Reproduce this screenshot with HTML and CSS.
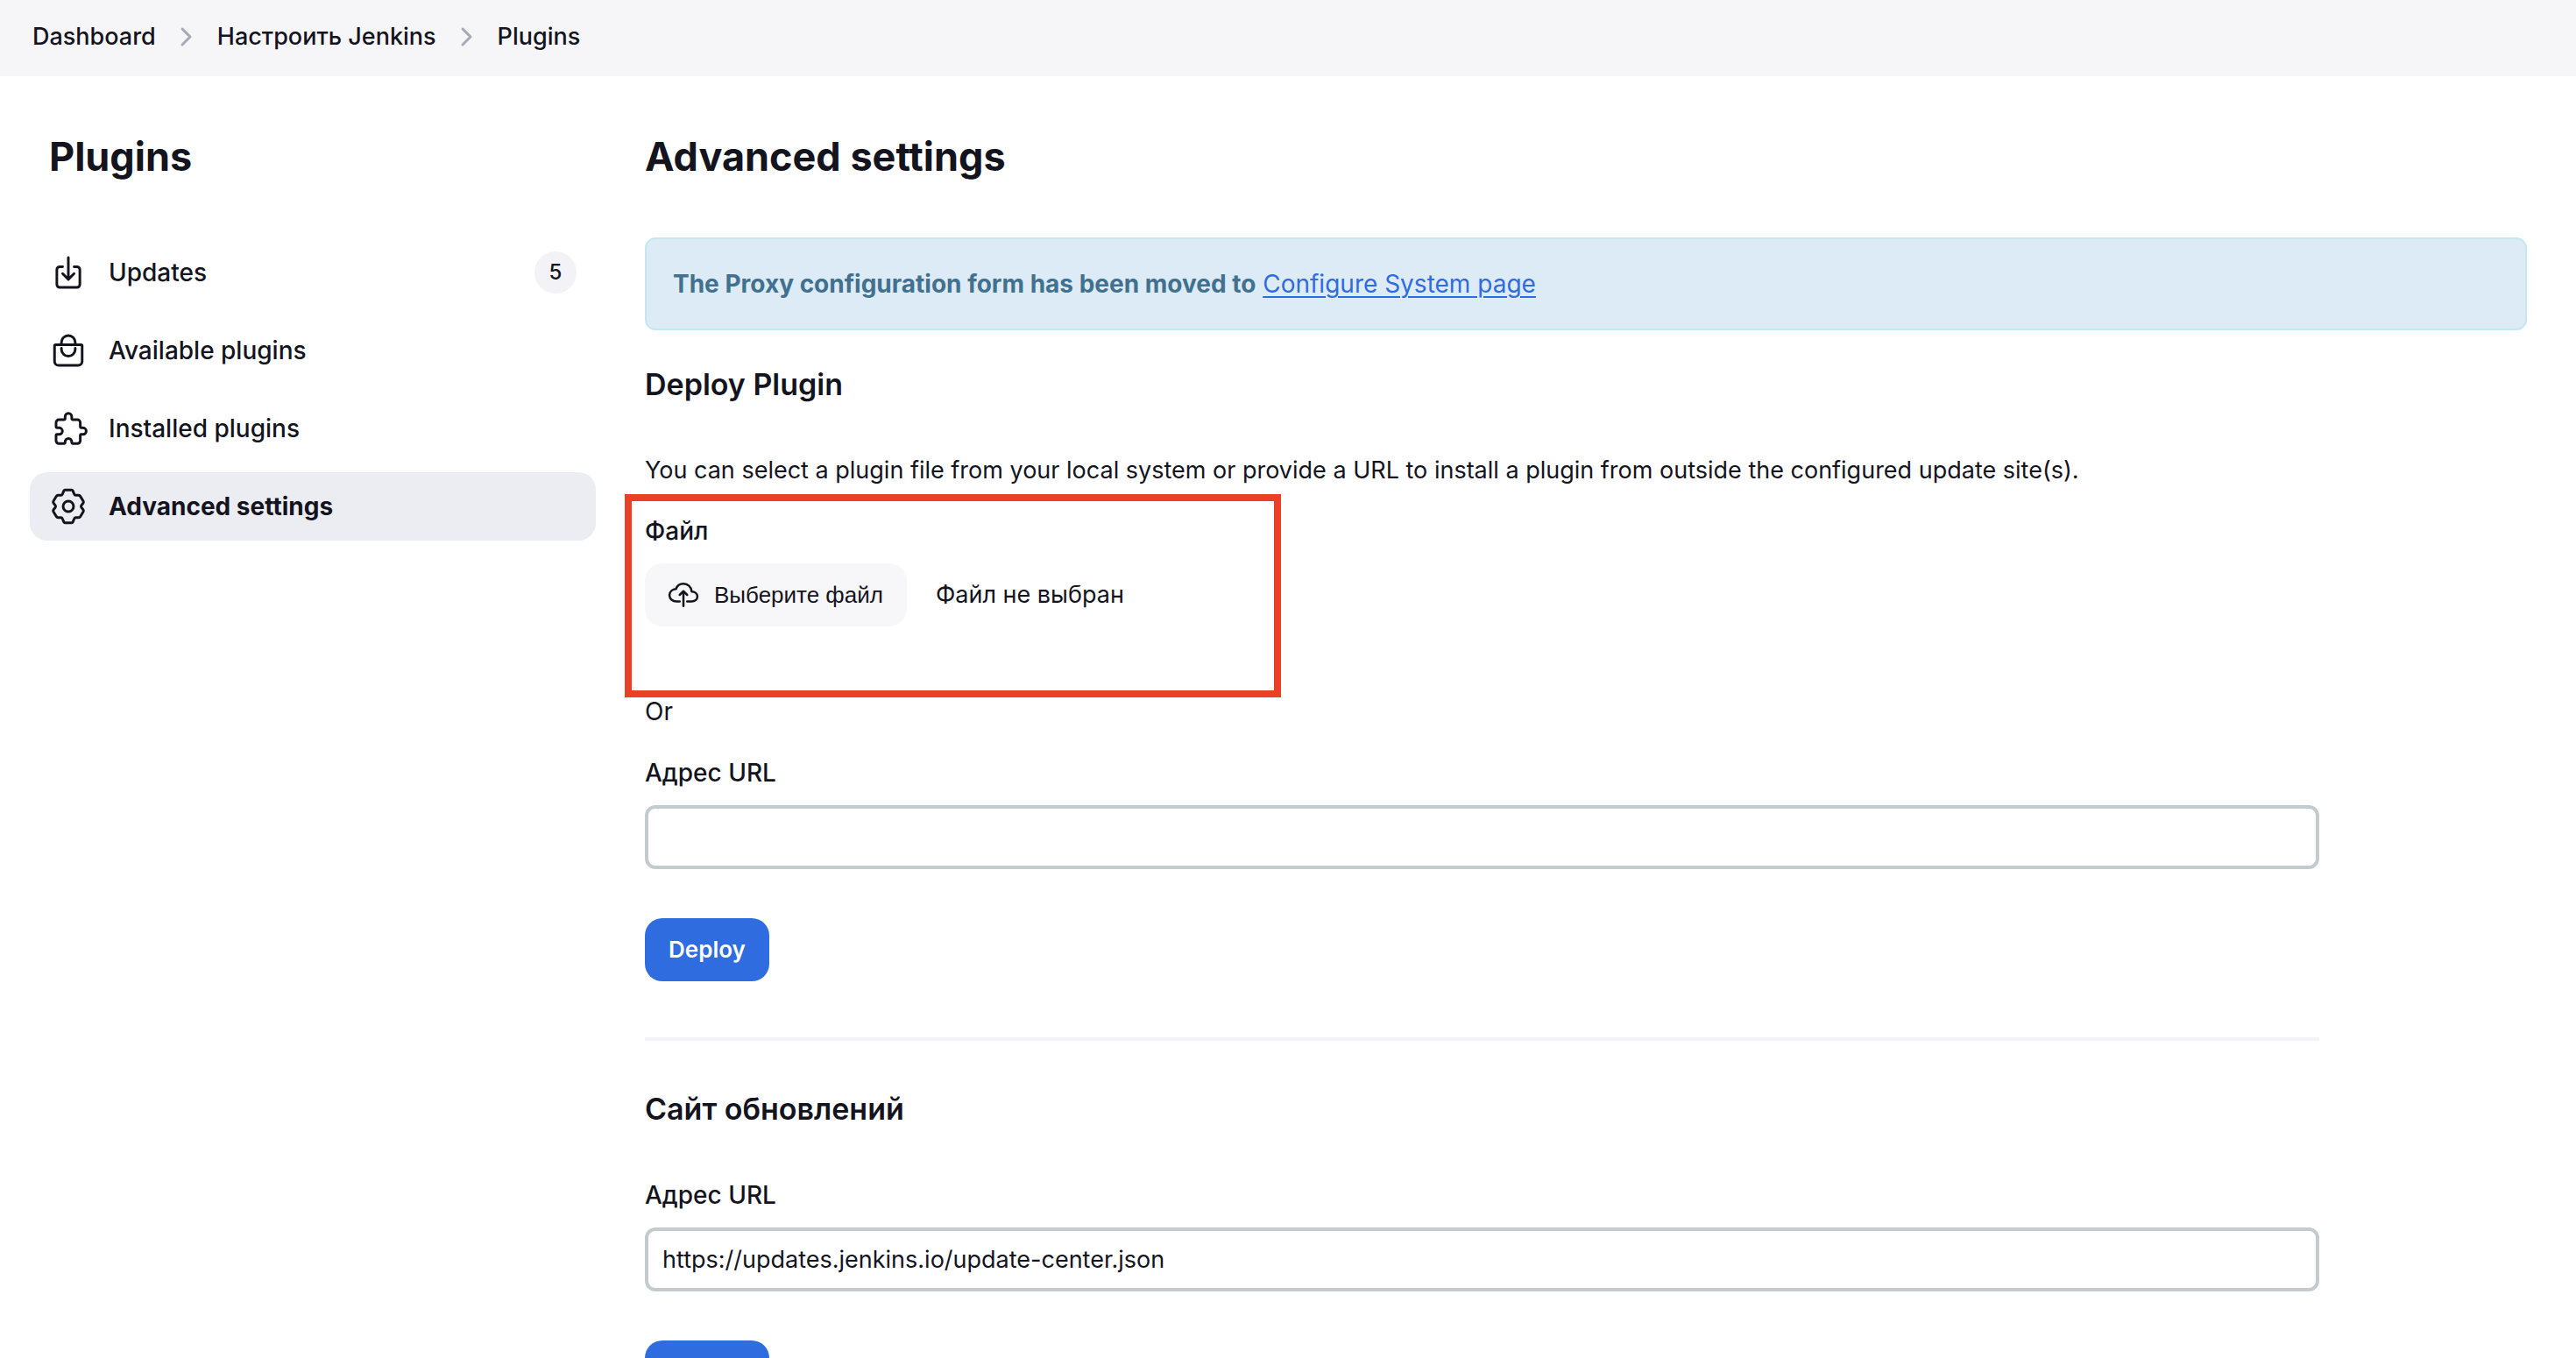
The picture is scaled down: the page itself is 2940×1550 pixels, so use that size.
FILE: index.html
```html
<!DOCTYPE html>
<html lang="ru">
<head>
<meta charset="utf-8">
<title>Plugins - Jenkins</title>
<link rel="stylesheet" href="styles.css">
</head>
<body>
<nav class="breadcrumbs" aria-label="Breadcrumbs">
  <a href="#">Dashboard</a>
  <svg class="chevron" viewBox="0 0 14 24" aria-hidden="true"><path d="M2 3l9 9-9 9"/></svg>
  <a href="#">Настроить Jenkins</a>
  <svg class="chevron" viewBox="0 0 14 24" aria-hidden="true"><path d="M2 3l9 9-9 9"/></svg>
  <a href="#">Plugins</a>
</nav>
<div class="page">
  <aside class="side">
    <h1 class="side-title">Plugins</h1>
    <nav class="tasks" aria-label="Plugins">
      <a class="task" href="#">
        <svg class="icon" viewBox="0 0 512 512" aria-hidden="true"><path d="M336 176h40a40 40 0 0140 40v208a40 40 0 01-40 40H136a40 40 0 01-40-40V216a40 40 0 0140-40h40M176 272l80 80 80-80M256 48v288"/></svg>
        <span>Updates</span><span class="badge">5</span>
      </a>
      <a class="task" href="#">
        <svg class="icon" viewBox="0 0 512 512" aria-hidden="true"><path d="M80 176a16 16 0 00-16 16v216c0 30.240 25.760 56 56 56h272c30.240 0 56-24.510 56-54.750V192a16 16 0 00-16-16zM160 176v-32a96 96 0 01192 0v32M160 224v16a96 96 0 00192 0v-16"/></svg>
        <span>Available plugins</span>
      </a>
      <a class="task" href="#">
        <svg class="icon" viewBox="0 0 512 512" aria-hidden="true"><path d="M85 174a40 40 0 0140-40h74q12 0 12-12V92a46 46 0 0192 0v30q0 12 12 12h67a40 40 0 0140 40v62q0 12 12 12h26a45 45 0 010 90h-26q-12 0-12 12v77a40 40 0 01-40 40h-67q-12 0-12-12v-14a46 46 0 00-92 0v14q0 12-12 12h-74a40 40 0 01-40-40v-77q0-12 12-12h32a45 45 0 000-90h-32q-12 0-12-12z"/></svg>
        <span>Installed plugins</span>
      </a>
      <a class="task task-active" href="#" aria-current="page">
        <svg class="icon" viewBox="0 0 512 512" aria-hidden="true"><circle cx="256" cy="256" r="73"/><path d="M212 27h88q14 0 20 14l18 44q6 16 22 16h40q14 0 22 13l42 70q8 13-2 26l-25 32q-9 14 0 28l25 32q10 13 2 26l-42 70q-8 13-22 13h-40q-16 0-22 16l-18 44q-6 14-20 14h-88q-14 0-20-14l-18-44q-6-16-22-16h-40q-14 0-22-13l-42-70q-8-13 2-26l25-32q9-14 0-28l-25-32q-10-13-2-26l42-70q8-13 22-13h40q16 0 22-16l18-44q6-14 20-14z"/></svg>
        <span>Advanced settings</span>
      </a>
    </nav>
  </aside>
  <main class="main">
    <h1 class="title">Advanced settings</h1>
    <div class="alert"><strong>The Proxy configuration form has been moved to</strong> <a href="#">Configure System page</a></div>
    <form class="form">
      <h2 class="section-title">Deploy Plugin</h2>
      <p class="text">You can select a plugin file from your local system or provide a URL to install a plugin from outside the configured update site(s).</p>
      <div class="file-group">
        <span class="label" id="file-label">Файл</span>
        <div class="file-row">
          <button class="file-button" type="button" aria-describedby="file-label">
            <svg class="file-icon" viewBox="0 0 512 512" aria-hidden="true"><path d="M320 367.790h76c55 0 100-29.210 100-83.600s-53-81.470-96-83.600c-8.890-85.060-71-136.800-144-136.800-69 0-113.440 45.790-128 91.200-60 5.700-112 43.880-112 106.400s54 106.400 120 106.400h56M320 255.790l-64-64-64 64M256 448.210V207.790"/></svg>
            Выберите файл
          </button>
          <span class="text">Файл не выбран</span>
        </div>
      </div>
      <p class="or">Or</p>
      <label class="label" for="plugin-url">Адрес URL</label>
      <input class="input" id="plugin-url" type="text">
      <button class="button" type="button">Deploy</button>
    </form>
    <hr class="rule">
    <form class="form">
      <h2 class="section-title">Сайт обновлений</h2>
      <label class="label" for="site-url">Адрес URL</label>
      <input class="input" id="site-url" type="text" value="https://updates.jenkins.io/update-center.json">
      <button class="button" type="button">Submit</button>
    </form>
  </main>
</div>
</body>
</html>
```
FILE: styles.css
```css
* { box-sizing: border-box; }
body {
  margin: 0;
  height: 100vh;
  overflow: hidden;
  background: #fff;
  color: #14141f;
  font: 400 28px/42px Inter, "Liberation Sans", sans-serif;
}
a { color: inherit; text-decoration: none; }
h1, h2, p { margin: 0; }
svg { fill: none; stroke: currentColor; stroke-linecap: round; stroke-linejoin: round; flex: none; overflow: visible; }
.breadcrumbs {
  display: flex;
  align-items: center;
  height: 87px;
  padding: 0 37px 4px;
  background: #f6f6f8;
  font-size: 27px;
  font-weight: 500;
}
.chevron { width: 14px; height: 24px; margin: 0 28px; color: #a9a8b8; stroke-width: 3; }
.page { display: grid; grid-template-columns: 646px minmax(0, 1fr); column-gap: 56px; padding: 60px 56px 0 34px; }
.side-title, .title { font-size: 45px; line-height: 64px; font-weight: 700; }
.side-title { padding-left: 22px; }
.tasks { display: flex; flex-direction: column; gap: 11px; margin-top: 61px; }
.task {
  display: flex;
  align-items: center;
  gap: 25px;
  height: 78px;
  padding: 0 22px 0 23px;
  border-radius: 20px;
  font-weight: 500;
}
.task-active { background: #ecedf2; font-weight: 700; }
.icon { width: 42px; height: 42px; stroke-width: 36; }
.badge {
  margin-left: auto;
  width: 48px;
  height: 48px;
  border-radius: 50%;
  background: #f2f2f7;
  text-align: center;
  font-size: 24px;
  line-height: 48px;
}
.alert {
  margin-top: 60px;
  padding: 30px;
  border: 2px solid #c5e8f0;
  border-radius: 12px;
  background: #dcebf6;
  color: #42708f;
}
.alert a { color: #2f6ce0; text-decoration: underline; text-decoration-thickness: 2px; text-underline-offset: 4px; }
.form { width: 1911px; max-width: 100%; display: flex; flex-direction: column; align-items: flex-start; }
.section-title { margin: 37px 0 52px; font-size: 34px; line-height: 50px; font-weight: 600; }
.rule + .form .section-title { margin-top: 53px; }
.text { font-size: 27px; line-height: 42px; }
.file-group {
  width: 749px;
  height: 232px;
  margin: 6px 0 0 -23px;
  padding: 13px 15px;
  border: 8px solid #ea4025;
}
.label { font-size: 28px; line-height: 42px; font-weight: 500; }
.file-row { display: flex; align-items: center; gap: 33px; margin-top: 16px; }
.file-button {
  display: flex;
  align-items: center;
  gap: 18px;
  height: 72px;
  padding: 0 27px;
  border: 0;
  border-radius: 20px;
  background: #f7f7f9;
  color: inherit;
  font: 400 26px/42px "Liberation Sans", sans-serif;
}
.file-icon { width: 34px; height: 34px; stroke-width: 38; }
.or { margin-bottom: 33px; font-size: 28px; line-height: 32px; }
.input {
  width: 100%;
  height: 73px;
  margin-top: 16px;
  padding: 0 16px;
  border: 4px solid #c3cbcf;
  border-radius: 12px;
  background: #fff;
  color: inherit;
  font: 400 27px/42px Inter, "Liberation Sans", sans-serif;
}
.button {
  height: 72px;
  margin-top: 56px;
  padding: 0 27px;
  border: 0;
  border-radius: 20px;
  background: #2f6ce0;
  color: #fff;
  font: 600 26px/42px Inter, "Liberation Sans", sans-serif;
}
.rule { width: 1911px; max-width: 100%; height: 4px; margin: 64px 0 0; border: 0; background: #f2f2f7; }
```
